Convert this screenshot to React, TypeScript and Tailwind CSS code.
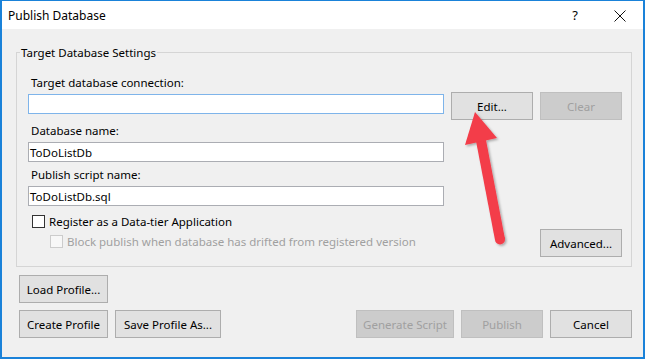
import React from "react";

const font = { fontFamily: '"Noto Sans", "Open Sans", sans-serif' };

function Button({
  label,
  width,
  disabled,
}: {
  label: string;
  width: string;
  disabled?: boolean;
}) {
  return (
    <button
      className={`${width} h-[28px] shrink-0 border text-[11.5px] leading-[15px] ${
        disabled
          ? "bg-[#cccccc] border-[#bfbfbf] text-[#a0a0a0]"
          : "bg-[#e1e1e1] border-[#adadad] text-black"
      }`}
    >
      {label}
    </button>
  );
}

function Field({ value, focused }: { value?: string; focused?: boolean }) {
  return (
    <div
      className={`w-[416px] h-[20px] shrink-0 bg-white border px-[1px] flex items-center text-[11.5px] text-black ${
        focused ? "border-[#7eb4ea]" : "border-[#abadb3]"
      }`}
    >
      {value}
    </div>
  );
}

function Check({ label, disabled }: { label: string; disabled?: boolean }) {
  return (
    <div className="flex items-center gap-[4px] h-[20px]">
      <span
        className={`w-[13px] h-[13px] border ${
          disabled ? "border-[#cccccc] bg-[#f7f7f7]" : "border-[#333333] bg-white"
        }`}
      />
      <span className={disabled ? "text-[#a0a0a0]" : "text-black"}>{label}</span>
    </div>
  );
}

export default function App() {
  return (
    <div
      className="relative w-[645px] h-[359px] flex flex-col border-t border-x-2 border-b-2 border-[#1a82d9] bg-[#f0f0f0] text-[11.5px] leading-[15px] text-black"
      style={font}
    >
      {/* title bar */}
      <div className="h-[28px] bg-white flex items-center pl-[6px] pr-[17px]">
        <span className="text-[12px]">Publish Database</span>
        <span className="ml-auto text-[13px] mr-[36px]">?</span>
        <svg width="12" height="12" viewBox="0 0 12 12" className="mt-[1px]">
          <path d="M0.5 0.5 L11.5 11.5 M11.5 0.5 L0.5 11.5" stroke="#111" strokeWidth="1" />
        </svg>
      </div>

      <div className="flex-1 flex flex-col pt-[16px] pl-[14px] pr-[11px]">
        <fieldset className="border border-[#d5d5d5] h-[222px]">
          <legend className="ml-[3px] px-[1px] leading-[15px]">Target Database Settings</legend>
          <div className="flex flex-col pl-[11px] pr-[9px] pt-[15px]">
            <span className="ml-[3px]">Target database connection:</span>
            <div className="flex items-start gap-[7px] mt-[2px]">
              <div className="mt-[2px]">
                <Field focused />
              </div>
              <Button label="Edit..." width="w-[82px]" />
              <Button label="Clear" width="w-[82px]" disabled />
            </div>
            <span className="ml-[3px] mt-[3px]">Database name:</span>
            <div className="mt-[4px]">
              <Field value="ToDoListDb" />
            </div>
            <span className="ml-[3px] mt-[5px]">Publish script name:</span>
            <div className="mt-[4px]">
              <Field value="ToDoListDb.sql" />
            </div>
            <div className="flex items-start mt-[5px]">
              <div className="flex flex-col pl-[4px]">
                <Check label="Register as a Data-tier Application" />
                <div className="pl-[18px]">
                  <Check label="Block publish when database has drifted from registered version" disabled />
                </div>
              </div>
              <div className="ml-auto mt-[18px]">
                <Button label="Advanced..." width="w-[82px]" />
              </div>
            </div>
          </div>
        </fieldset>

        <div className="flex flex-col gap-[7px] mt-[8px] pl-[3px]">
          <Button label="Load Profile..." width="w-[89px]" />
          <div className="flex gap-[7px]">
            <Button label="Create Profile" width="w-[89px]" />
            <Button label="Save Profile As..." width="w-[106px]" />
            <div className="ml-auto flex gap-[7px]">
              <Button label="Generate Script" width="w-[98px]" disabled />
              <Button label="Publish" width="w-[82px]" disabled />
              <Button label="Cancel" width="w-[82px]" />
            </div>
          </div>
        </div>
      </div>

      {/* red annotation arrow */}
      <svg
        className="absolute left-[-2px] top-[-1px] pointer-events-none"
        width="645"
        height="359"
        viewBox="0 0 645 359"
      >
        <defs>
          <filter id="sh" x="-20%" y="-20%" width="140%" height="140%">
            <feDropShadow dx="1.5" dy="1.5" stdDeviation="1.2" floodColor="#000" floodOpacity="0.3" />
          </filter>
        </defs>
        <g filter="url(#sh)" fill="#f33c48">
          <polygon points="486,140 476,141 495,240 505,239" />
          <circle cx="500" cy="239.5" r="5" />
          <polygon points="475,112 465,145 497,138" />
        </g>
      </svg>
    </div>
  );
}
